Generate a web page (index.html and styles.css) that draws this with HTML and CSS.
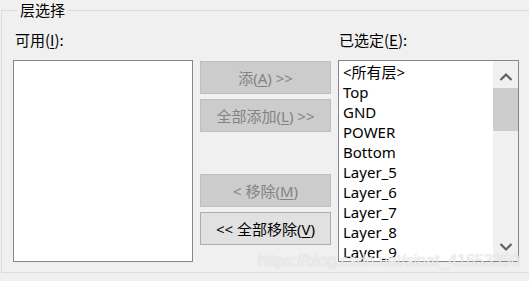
FILE: index.html
```html
<!DOCTYPE html>
<html lang="zh-CN">
<head>
    <meta charset="UTF-8">
    <title>层选择</title>
    <link rel="stylesheet" href="styles.css">
</head>
<body>
    <fieldset class="layer-group">
        <legend>层选择</legend>
        <div class="layer-grid">
            <label class="list-label">可用(<u>I</u>):</label>
            <div></div>
            <label class="list-label right">已选定(<u>E</u>):</label>

            <div class="listbox"></div>

            <div class="button-col">
                <button class="win-btn" disabled>添(<u>A</u>) &gt;&gt;</button>
                <button class="win-btn" disabled>全部添加(<u>L</u>) &gt;&gt;</button>
                <button class="win-btn spaced" disabled>&lt; 移除(<u>M</u>)</button>
                <button class="win-btn">&lt;&lt; 全部移除(<u>V</u>)</button>
            </div>

            <div class="listbox with-scroll">
                <ul class="items">
                    <li>&lt;所有层&gt;</li>
                    <li>Top</li>
                    <li>GND</li>
                    <li>POWER</li>
                    <li>Bottom</li>
                    <li>Layer_5</li>
                    <li>Layer_6</li>
                    <li>Layer_7</li>
                    <li>Layer_8</li>
                    <li>Layer_9</li>
                </ul>
                <div class="scrollbar">
                    <svg class="arrow" width="14" height="10" viewBox="0 0 14 10">
                        <path d="M1.5 8 L7 2.5 L12.5 8" fill="none" stroke="#606060" stroke-width="2.2"/>
                    </svg>
                    <div class="thumb"></div>
                    <div class="track"></div>
                    <svg class="arrow" width="14" height="10" viewBox="0 0 14 10">
                        <path d="M1.5 2 L7 7.5 L12.5 2" fill="none" stroke="#606060" stroke-width="2.2"/>
                    </svg>
                </div>
            </div>
        </div>
    </fieldset>
    <div class="watermark">https://blog.csdn.net/sinat_41653350</div>
</body>
</html>
```

FILE: styles.css
```css
body {
    margin: 0;
    background: #f0f0f0;
    font-family: "Noto Sans", "Noto Sans CJK SC", sans-serif;
    font-size: 15px;
    color: #000;
    width: 529px;
    height: 281px;
    overflow: hidden;
    position: relative;
}

.layer-group {
    margin: 0 -20px 0 1px;
    padding: 0 0 10px 11px;
    border: 1px solid #dcdcdc;
    min-width: 0;
}

.layer-group legend {
    padding: 0 2px;
    margin-left: 5px;
    line-height: 20px;
    font-family: "Noto Sans CJK SC", sans-serif;
    font-size: 15px;
}

.layer-grid {
    display: grid;
    grid-template-columns: 180px 131px 181px;
    grid-template-rows: 40px 202px;
    column-gap: 7px;
}

.list-label {
    padding-top: 10px;
    line-height: 20px;
    font-family: "Noto Sans CJK SC", sans-serif;
    padding-left: 2px;
}

.list-label.right {
    padding-left: 1px;
}

.list-label u {
    text-underline-offset: 2px;
}

.listbox {
    background: #fff;
    border: 1px solid #828790;
    box-sizing: border-box;
    height: 202px;
}

.with-scroll {
    display: flex;
}

.items {
    flex: 1;
    list-style: none;
    margin: 0;
    padding: 1px 0 0 4px;
    overflow: hidden;
}

.items li {
    line-height: 20px;
    height: 20px;
    white-space: nowrap;
}

.scrollbar {
    width: 25px;
    background: #f0f0f0;
    display: flex;
    flex-direction: column;
    align-items: center;
}

.arrow {
    margin: 11px 0 6px;
}

.scrollbar .arrow:last-child {
    margin: 0 0 9px;
}

.thumb {
    width: 100%;
    height: 43px;
    background: #cdcdcd;
}

.track {
    flex: 1;
}

.button-col {
    display: flex;
    flex-direction: column;
    gap: 5px;
    padding-top: 1px;
}

.win-btn {
    height: 33px;
    box-sizing: border-box;
    background: #e1e1e1;
    border: 1px solid #adadad;
    font-family: "Noto Sans", "Noto Sans CJK SC", sans-serif;
    font-size: 15px;
    color: #000;
    padding: 0;
}

.win-btn:disabled {
    background: #cccccc;
    border-color: #bfbfbf;
    color: #838383;
}

.win-btn.spaced {
    margin-top: 37px;
}

.win-btn u {
    text-underline-offset: 2px;
}

.watermark {
    position: absolute;
    left: 258px;
    top: 252px;
    font-family: "Liberation Sans", sans-serif;
    font-size: 16px;
    color: rgba(255, 255, 255, 0.75);
    text-shadow: 0 0 1px rgba(150, 150, 150, 0.6);
    white-space: nowrap;
}
```
